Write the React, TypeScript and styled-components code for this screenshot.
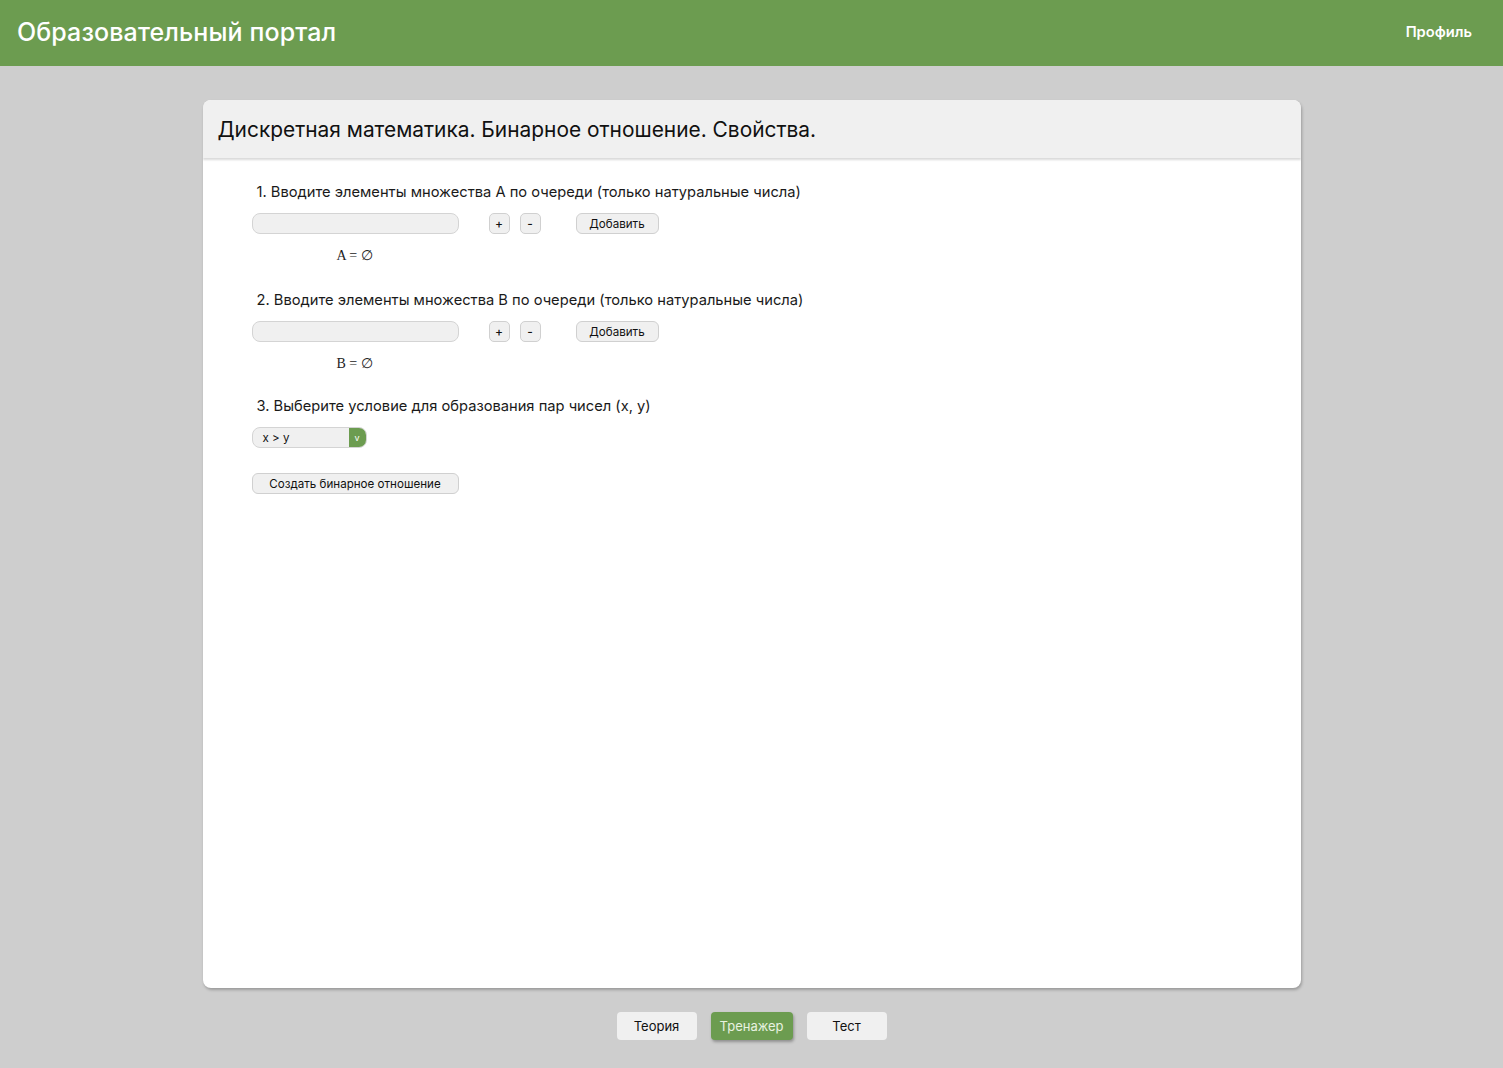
import React from "react";
import styled, { createGlobalStyle } from "styled-components";

const Global = createGlobalStyle`
  html, body { margin: 0; padding: 0; }
  body {
    background: #cecece;
    font-family: Inter, "Noto Sans", "Liberation Sans", sans-serif;
    color: #1a1a1a;
    min-height: 1068px;
  }
`;

const Page = styled.div`
  display: flex;
  flex-direction: column;
  min-height: 1068px;
`;

const Header = styled.header`
  height: 66px;
  background: #6c9c50;
  display: flex;
  align-items: center;
  justify-content: space-between;
  padding: 0 31px 0 17px;
  box-sizing: border-box;
`;

const Brand = styled.h1`
  margin: 0 0 2px;
  font-size: 25px;
  font-weight: 500;
  color: #ffffff;
  letter-spacing: 0.1px;
`;

const ProfileLink = styled.a`
  color: #ffffff;
  font-size: 14.7px;
  font-weight: 600;
  text-decoration: none;
  cursor: pointer;
  margin-bottom: 3px;
`;

const Main = styled.main`
  display: flex;
  flex-direction: column;
  align-items: center;
  padding-top: 34px;
`;

const Card = styled.section`
  width: 1098px;
  height: 888px;
  background: #ffffff;
  border-radius: 8px;
  box-shadow: 1px 2px 3px rgba(0, 0, 0, 0.25);
  overflow: hidden;
  display: flex;
  flex-direction: column;
`;

const CardHeader = styled.div`
  height: 58px;
  background: #f0f0f0;
  display: flex;
  align-items: center;
  padding-left: 15px;
  box-shadow: 0 2px 2px rgba(0, 0, 0, 0.15);
  position: relative;
  z-index: 1;
`;

const CardTitle = styled.h2`
  margin: 0;
  font-size: 20.9px;
  font-weight: 400;
  color: #111;
`;

const CardBody = styled.div`
  padding: 24px 0 0 49px;
  display: flex;
  flex-direction: column;
`;

const Step = styled.div<{ $gap?: number }>`
  display: flex;
  flex-direction: column;
  margin-bottom: ${(p) => p.$gap ?? 0}px;
`;

const StepLabel = styled.div`
  font-size: 14.7px;
  padding-left: 5px;
  height: 20px;
  line-height: 21px;
  margin-bottom: 11px;
`;

const Row = styled.div`
  display: flex;
  align-items: center;
`;

const TextInput = styled.input`
  width: 207px;
  height: 21px;
  box-sizing: border-box;
  background: #f0f0f0;
  border: 1px solid #d4d4d4;
  border-radius: 8px;
  outline: none;
  padding: 0 8px;
`;

const SmallButton = styled.button<{ $ml: number }>`
  width: 21px;
  height: 21px;
  margin-left: ${(p) => p.$ml}px;
  padding: 0;
  box-sizing: border-box;
  background: #f0f0f0;
  border: 1px solid #d0d0d0;
  border-radius: 5px;
  font-family: inherit;
  font-size: 12px;
  font-weight: 500;
  color: #111;
  line-height: 1;
`;

const GreyButton = styled.button<{ $w: number; $ml?: number }>`
  width: ${(p) => p.$w}px;
  height: 21px;
  margin-left: ${(p) => p.$ml ?? 0}px;
  box-sizing: border-box;
  padding: 0;
  background: #f0f0f0;
  border: 1px solid #d0d0d0;
  border-radius: 6px;
  font-family: inherit;
  font-size: 11.6px;
  color: #111;
`;

const SetValue = styled.div`
  margin: 14px 0 0 85px;
  font-family: "Liberation Serif", "DejaVu Serif", serif;
  font-size: 14px;
  color: #222;
  height: 16px;
  line-height: 16px;
`;

const Select = styled.div`
  width: 115px;
  height: 21px;
  box-sizing: border-box;
  background: #f0f0f0;
  border: 1px solid #d4d4d4;
  border-radius: 8px;
  display: flex;
  align-items: center;
  overflow: hidden;
`;

const SelectValue = styled.span`
  flex: 1;
  font-size: 11.6px;
  padding-left: 10px;
  color: #111;
`;

const SelectArrow = styled.span`
  width: 17px;
  height: 100%;
  background: #6c9c50;
  color: #ffffff;
  font-size: 9px;
  display: flex;
  align-items: center;
  justify-content: center;
`;

const Nav = styled.nav`
  display: flex;
  justify-content: center;
  gap: 14px;
  margin-top: 24px;
`;

const NavButton = styled.button<{ $active?: boolean; $w: number }>`
  width: ${(p) => p.$w}px;
  height: 28px;
  border: none;
  border-radius: 4px;
  font-family: inherit;
  font-size: 13px;
  background: ${(p) => (p.$active ? "#6c9c50" : "#f0f0f0")};
  color: ${(p) => (p.$active ? "#e8f2e0" : "#111")};
  box-shadow: ${(p) => (p.$active ? "1px 2px 3px rgba(0,0,0,0.3)" : "none")};
`;

export default function App() {
  return (
    <Page>
      <Global />
      <Header>
        <Brand>Образовательный портал</Brand>
        <ProfileLink>Профиль</ProfileLink>
      </Header>
      <Main>
        <Card>
          <CardHeader>
            <CardTitle>Дискретная математика. Бинарное отношение. Свойства.</CardTitle>
          </CardHeader>
          <CardBody>
            <Step $gap={26}>
              <StepLabel>1. Вводите элементы множества A по очереди (только натуральные числа)</StepLabel>
              <Row>
                <TextInput />
                <SmallButton $ml={30}>+</SmallButton>
                <SmallButton $ml={10}>-</SmallButton>
                <GreyButton $w={83} $ml={35}>Добавить</GreyButton>
              </Row>
              <SetValue>A = ∅</SetValue>
            </Step>
            <Step $gap={24}>
              <StepLabel>2. Вводите элементы множества B по очереди (только натуральные числа)</StepLabel>
              <Row>
                <TextInput />
                <SmallButton $ml={30}>+</SmallButton>
                <SmallButton $ml={10}>-</SmallButton>
                <GreyButton $w={83} $ml={35}>Добавить</GreyButton>
              </Row>
              <SetValue>B = ∅</SetValue>
            </Step>
            <Step $gap={25}>
              <StepLabel>3. Выберите условие для образования пар чисел (x, y)</StepLabel>
              <Select>
                <SelectValue>x &gt; y</SelectValue>
                <SelectArrow>v</SelectArrow>
              </Select>
            </Step>
            <Row>
              <GreyButton $w={207}>Создать бинарное отношение</GreyButton>
            </Row>
          </CardBody>
        </Card>
        <Nav>
          <NavButton $w={80}>Теория</NavButton>
          <NavButton $w={82} $active>Тренажер</NavButton>
          <NavButton $w={80}>Тест</NavButton>
        </Nav>
      </Main>
    </Page>
  );
}
